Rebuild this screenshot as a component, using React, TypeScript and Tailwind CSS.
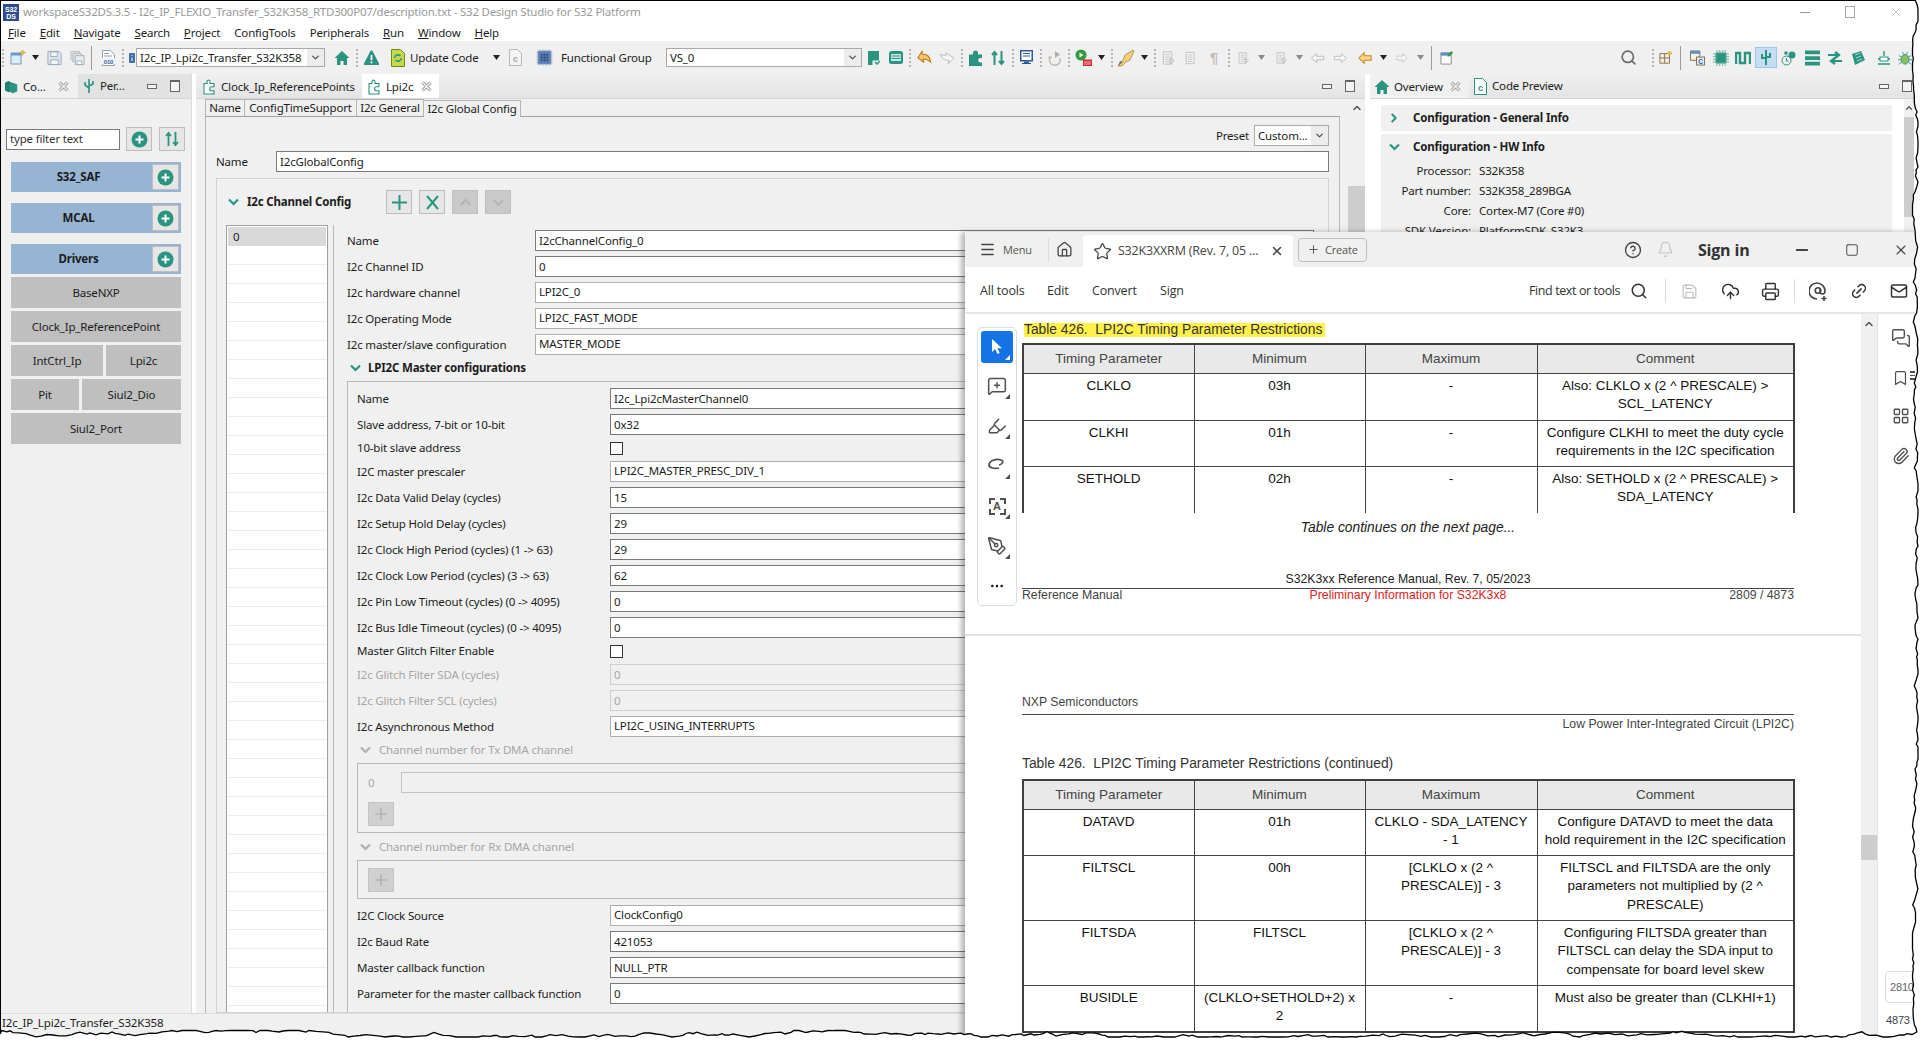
import React from "react";
import { Menu, Home, Star, X, Plus, CircleHelp, Bell, Minus, Square, Search, Save, CloudUpload, Printer, Link2, Mail, MessageSquarePlus, Highlighter, PenTool, Ellipsis, MessagesSquare, Bookmark, LayoutGrid, Paperclip, ChevronUp, ChevronDown, ChevronRight } from "lucide-react";

const TEAL = "#2a9480";

function S({ c, vb = "0 0 16 16", children }: { c: string; vb?: string; children?: React.ReactNode }) {
  return <svg className={"shrink-0 " + c} viewBox={vb} fill="none">{children}</svg>;
}
function Grip({ c }: { c: string }) {
  return <div className={"shrink-0 h-[18px] w-[2px] border-l-2 border-dotted border-[#b8b6ae] " + c} />;
}
function Sep({ c }: { c: string }) {
  return <div className={"shrink-0 h-[24px] w-[1px] bg-[#9a9a9a] " + c} />;
}
function Drop({ c, grey }: { c: string; grey?: boolean }) {
  return <S c={"w-[7px] h-[5px] " + c} vb="0 0 7 5"><path d="M0 0h7L3.5 5z" fill={grey ? "#8b8b8b" : "#222"} /></S>;
}
function DocG({ c, arrow }: { c: string; arrow?: boolean }) {
  return (
    <S c={"h-[18px] " + c}>
      <path d="M2.5 1.5h9v13h-9z" fill="#f2f2f2" stroke="#bdbdbd" />
      <path d="M4.5 4.5h5M4.5 7h5M4.5 9.5h5M4.5 12h5" stroke="#c4c4c4" />
      {arrow && <path d="M10 8l4 3-4 3z" fill="#e8e8e8" stroke="#b5b5b5" />}
    </S>
  );
}
function TabClose() {
  return (
    <svg className="shrink-0 w-[11px] h-[11px]" viewBox="0 0 11 11" fill="none">
      <path d="M1.5 1.5l8 8M9.5 1.5l-8 8" stroke="#8a8a8a" strokeWidth="3" />
      <path d="M1.5 1.5l8 8M9.5 1.5l-8 8" stroke="#f7f7f7" strokeWidth="1.4" />
    </svg>
  );
}
function Puzzle({ c = "w-[13px] h-[16px]" }: { c?: string }) {
  return (
    <S c={c} vb="0 0 13 16">
      <path d="M1 4.5h3V2.6a1.5 1.5 0 013 0V4.5h4v3.2H8.6a2 2 0 000 4H11V15H1z" stroke={TEAL} strokeWidth="1.1" fill="#fff" />
    </S>
  );
}
function MinMax({ a, b }: { a: string; b: string }) {
  return (
    <>
      <div className={"shrink-0 w-[10px] h-[5px] border border-[#666] bg-[#f4f4f4] " + a} />
      <div className={"shrink-0 w-[10px] h-[12px] border border-[#666] border-t-2 bg-[#f4f4f4] " + b} />
    </>
  );
}
function Plusy({ c }: { c: string }) {
  return (
    <div className={"shrink-0 flex items-center justify-center border border-[#bdbdbd] bg-[#e6e6e6] " + c}>
      <svg className="w-[17px] h-[17px]" viewBox="0 0 17 17">
        <circle cx="8.5" cy="8.5" r="8" fill={TEAL} />
        <path d="M8.5 4.5v8M4.5 8.5h8" stroke="#fff" strokeWidth="2" />
      </svg>
    </div>
  );
}
function Combo({ children, c }: { children: React.ReactNode; c: string }) {
  return (
    <div className={"shrink-0 flex items-center justify-between border border-[#a9a9a9] bg-white " + c}>
      <span className="pl-[3px] whitespace-nowrap">{children}</span>
      <div className="flex items-center justify-center h-full bg-[#ececec] w-[17px]">
        <ChevronDown className="w-[11px] h-[11px] text-[#555]" strokeWidth={3} />
      </div>
    </div>
  );
}

function Toolbar() {
  return (
    <div className="flex items-center h-[33px] bg-[#f0f0f0] overflow-hidden shrink-0">
      <Grip c="ml-[2px]" />
      <S c="ml-[6px] w-[16px] h-[17px]"><path d="M1 3.5h10v11H1z" fill="#dcecf8" stroke="#7d97b3" /><path d="M1 3.5h10V6H1z" fill="#6a9bd0" /><path d="M12.5 0.5l1 2 2 .6-2 .8-1 2-.9-2-2-.8 2-.6z" fill="#f4c542" stroke="#b98a18" strokeWidth=".5" /></S>
      <Drop c="ml-[6px]" />
      <S c="ml-[8px] w-[15px] h-[16px]"><path d="M1 1h12l2 2v12H1z" fill="#dde6ef" stroke="#98a8ba" /><path d="M4 1.5h7v5H4zM4 10h8v5H4z" fill="#f4f7fa" stroke="#98a8ba" /></S>
      <S c="ml-[8px] w-[15px] h-[16px]"><path d="M1 1h9v9H1z" fill="#dfe4e9" stroke="#b8c0c8" /><path d="M3 3h9v9H3z" fill="#dfe4e9" stroke="#b0b8c1" /><path d="M5.5 5.5h9.5v9.5H5.5z" fill="#e8edf2" stroke="#a2acb6" /><path d="M7.5 11h5v4h-5z" fill="#fff" stroke="#a2acb6" /></S>
      <Sep c="ml-[6px]" />
      <S c="ml-[10px] w-[13px] h-[16px]" vb="0 0 13 16"><path d="M.5.5h8l4 4v11H.5z" fill="#fff" stroke="#8aa0b8" /><path d="M2 3.5h5M2 6h8" stroke="#8aa0b8" /><rect x="0" y="8" width="13" height="6" fill="#eef3f8" /><text x="6.5" y="13.5" textAnchor="middle" fontSize="6" fontFamily="Liberation Sans" fontWeight="700" fill="#3e6a9a">010</text></S>
      <Grip c="ml-[7px]" />
      <S c="ml-[5px] w-[6px] h-[10px]" vb="0 0 6 10"><rect width="6" height="10" rx="1" fill="#3f6ea5" /><path d="M3 2v1M3 4.5V8" stroke="#fff" /></S>
      <Combo c="ml-[1px] w-[189px] h-[19px]">I2c_IP_Lpi2c_Transfer_S32K358</Combo>
      <S c="ml-[9px] w-[16px] h-[16px]"><path d="M8 1L0.5 8H3v7h3.5v-4h3v4H13V8h2.5z" fill={TEAL} /></S>
      <Grip c="ml-[6px]" />
      <S c="ml-[5px] w-[17px] h-[16px]"><path d="M8 .5c.7 0 1 .3 1.3.9l6.2 12c.4.9 0 1.6-1 1.6h-13c-1 0-1.4-.7-1-1.6l6.2-12C7 .8 7.3.5 8 .5z" fill={TEAL} /><path d="M8 5v5.2M8 11.5v1.7" stroke="#fff" strokeWidth="1.8" /></S>
      <S c="ml-[11px] w-[14px] h-[18px]" vb="0 0 14 18"><path d="M.5.5h9l4 4v13H.5z" fill="#c7d94a" stroke="#6f8a18" /><path d="M3.5 9a3.5 3.5 0 016-2M10.5 9a3.5 3.5 0 01-6 2" stroke={TEAL} strokeWidth="1.6" /></S>
      <span className="ml-[5px] w-[69px] whitespace-nowrap">Update Code</span>
      <Drop c="ml-[14px]" />
      <S c="ml-[9px] w-[13px] h-[17px]" vb="0 0 13 17"><path d="M.5.5h8l4 4v12H.5z" fill="#f4f4f4" stroke="#b8b8b8" /><text x="6.5" y="13" textAnchor="middle" fontSize="9" fontFamily="Liberation Sans" fontWeight="700" fill="#a6a6a6">c</text></S>
      <S c="ml-[14px] w-[17px] h-[17px]" vb="0 0 17 17"><rect x="2" y="2" width="13" height="13" fill="#4169a8" stroke="#8aa0c4" /><rect x="5" y="5" width="7" height="7" fill="#274a85" /><path d="M4 0v17M7 0v17M10 0v17M13 0v17M0 4h17M0 7h17M0 10h17M0 13h17" stroke="#8aa0c4" strokeWidth=".5" /></S>
      <span className="ml-[8px] w-[92px] whitespace-nowrap">Functional Group</span>
      <Combo c="ml-[13px] w-[196px] h-[19px]">VS_0</Combo>
      <S c="ml-[5px] w-[13px] h-[16px]" vb="0 0 13 16"><path d="M1 1h11v9.5H5.5V15H1z" fill={TEAL} /><path d="M8 12l2 2 3-3" stroke={TEAL} strokeWidth="1.5" /></S>
      <S c="ml-[8px] w-[16px] h-[16px]"><rect x="1" y="1" width="14" height="13" rx="2.5" fill={TEAL} /><rect x="3" y="4" width="10" height="7" fill="#cfe7e1" /><path d="M3.5 6h9M3.5 8.5h9" stroke={TEAL} /></S>
      <Grip c="ml-[5px]" />
      <S c="ml-[6px] w-[16px] h-[16px]"><path d="M6 1L1 7l5 5V9c3 0 5 1 7 4 0-6-2-9-7-9z" fill="#f6c667" stroke="#b5781c" transform="rotate(-8 8 8)" /></S>
      <S c="ml-[6px] w-[16px] h-[16px]"><path d="M7 3l8 5-6 6 1-3.5C6 10 3 9 1 4c2 1 4 1.5 6 1.5z" fill="#f6f6f6" stroke="#bcbcbc" /></S>
      <Grip c="ml-[6px]" />
      <S c="ml-[6px] w-[13px] h-[16px]" vb="0 0 13 16"><path d="M0 4.5h4V3a2.5 2.5 0 015 0v1.5h4V8h-2a2.3 2.3 0 000 4.5h2V16H0z" fill={TEAL} /></S>
      <S c="ml-[9px] w-[14px] h-[16px]" vb="0 0 14 16"><path d="M3.5 15V2M1 5l2.5-3L6 5M10.5 1v13M8 11l2.5 3 2.5-3" stroke={TEAL} strokeWidth="2" /></S>
      <Grip c="ml-[7px]" />
      <S c="ml-[6px] w-[13px] h-[15px]" vb="0 0 13 15"><rect x=".75" y=".75" width="11.5" height="10" fill="#fff" stroke="#2c5a9a" strokeWidth="1.5" /><path d="M3 3.5h7M3 6h7" stroke="#2c5a9a" /><path d="M4 11.5v1.5H2v1h9v-1H9v-1.5z" fill="#2c5a9a" /></S>
      <Grip c="ml-[7px]" />
      <S c="ml-[5px] w-[16px] h-[18px]"><path d="M3 7a5.5 5.5 0 1010 1" stroke="#bdbdb5" strokeWidth="1.6" /><path d="M8 1v7l5-3.5z" fill="#a8b3a8" /><path d="M2 6l1 2 2-1" stroke="#c6a566" /></S>
      <Grip c="ml-[5px]" />
      <S c="ml-[5px] w-[18px] h-[18px]" vb="0 0 18 18"><circle cx="6" cy="6" r="5.5" fill="#2f9a3e" /><path d="M4.5 3.5l4 2.5-4 2.5z" fill="#fff" /><rect x="8" y="10.5" width="9" height="6.5" fill="#d8232a" /><path d="M9 13h7M9 15h7" stroke="#fff" strokeWidth=".7" /></S>
      <Drop c="ml-[5px]" />
      <Grip c="ml-[6px]" />
      <S c="ml-[4px] w-[18px] h-[18px]" vb="0 0 18 18"><path d="M16 1l1 1-4 9-4 2-4 4-4 0 5-6 2-5z" fill="#f1cf7c" stroke="#9a7a3a" strokeWidth=".7" /><path d="M1 17l5-4-3-1z" fill="#7a7166" /></S>
      <Drop c="ml-[6px]" />
      <Grip c="ml-[6px]" />
      <DocG c="ml-[5px] w-[15px]" arrow />
      <DocG c="ml-[8px] w-[14px]" />
      <span className="ml-[12px] w-[8px] text-[15px] leading-none font-bold text-[#bcbcbc] font-['Liberation_Sans',sans-serif]">¶</span>
      <Grip c="ml-[10px]" />
      <DocG c="ml-[7px] w-[13px]" arrow />
      <Drop c="ml-[8px]" grey />
      <DocG c="ml-[10px] w-[13px]" arrow />
      <Drop c="ml-[8px]" grey />
      <S c="ml-[7px] w-[15px] h-[14px]"><path d="M1 8l6-5v3h8v4H7v3z" fill="#f4f4f4" stroke="#b8b8b8" /></S>
      <S c="ml-[8px] w-[15px] h-[14px]"><path d="M15 8L9 3v3H1v4h8v3z" fill="#f4f4f4" stroke="#b8b8b8" /></S>
      <S c="ml-[10px] w-[14px] h-[14px]"><path d="M1 8l6-6v3.5h8v5H7V14z" fill="#f8d985" stroke="#c9861d" strokeWidth="1.2" /></S>
      <Drop c="ml-[8px]" />
      <S c="ml-[9px] w-[12px] h-[14px]"><path d="M15 8L9 2v3.5H1v5h8V14z" fill="#f6f6f6" stroke="#bdbdbd" /></S>
      <Drop c="ml-[9px]" grey />
      <Sep c="ml-[7px]" />
      <S c="ml-[8px] w-[15px] h-[17px]"><path d="M1 3h11v12H1z" fill="#fff" stroke="#8a8a8a" /><path d="M1 3h11v3H1z" fill="#5f8fc4" /><path d="M12 1l2 2-4 4-2 0 0-2z" fill="#3d9a4a" /></S>
      <Search className="ml-[165px] shrink-0 w-[17px] h-[17px] text-[#6c6c6c]" strokeWidth={2.4} />
      <Grip c="ml-[15px]" />
      <S c="ml-[5px] w-[14px] h-[15px]"><path d="M1 3.5h11v11H1zM1 8.5h11M6.5 3.5v11" stroke="#7a6a55" fill="#f3ecd9" /><path d="M12 .5l1.2 1.6L15 3l-1.8 1L12 5.5 10.8 4 9 3l1.8-.9z" fill="#f4c542" stroke="#b98a18" strokeWidth=".5" /></S>
      <Sep c="ml-[7px]" />
      <S c="ml-[9px] w-[15px] h-[16px]"><path d="M.5.5h10v10H.5z" fill="#f7f0e0" stroke="#7b6a55" /><path d="M.5.5h10v3H.5z" fill="#5f8fc4" /><rect x="7" y="7" width="8.5" height="8.5" fill="#e5edf6" stroke="#7b6a55" /><text x="11.2" y="14" textAnchor="middle" fontSize="7" fontFamily="Liberation Sans" fontWeight="700" fill="#2c5a9a">C</text></S>
      <S c="ml-[8px] w-[16px] h-[16px]"><rect x="2.5" y="2.5" width="11" height="11" rx="1" fill={TEAL} /><path d="M4 0v16M6.7 0v16M9.3 0v16M12 0v16M0 4h16M0 6.7h16M0 9.3h16M0 12h16" stroke="#6bb6a6" strokeWidth="1" /><rect x="3.5" y="3.5" width="9" height="9" fill={TEAL} /></S>
      <S c="ml-[6px] w-[16px] h-[16px]"><path d="M1 14V3h4v10h5V3h5v11" stroke={TEAL} strokeWidth="2.4" /></S>
      <div className="ml-[4px] shrink-0 flex items-center justify-center w-[22px] h-[21px] bg-[#c5ddf3] border border-[#9cc5e8]">
        <S c="w-[12px] h-[17px]" vb="0 0 12 17"><path d="M6 1v15M2 5v4h3M10 4v4H7" stroke={TEAL} strokeWidth="2" /></S>
      </div>
      <S c="ml-[4px] w-[16px] h-[16px]"><circle cx="5.5" cy="10.5" r="4.5" stroke={TEAL} /><path d="M5.5 8v3h2" stroke={TEAL} /><circle cx="11" cy="5" r="3.5" fill={TEAL} /><circle cx="5" cy="3" r="1.8" fill={TEAL} /></S>
      <S c="ml-[8px] w-[15px] h-[16px]"><path d="M0 0h16v4H0zM0 6h16v4H0zM0 12h16v4H0z" fill={TEAL} /></S>
      <S c="ml-[7px] w-[16px] h-[16px]"><path d="M1 5h10M8 2l4 3-4 3M15 11H5M8 8l-4 3 4 3" stroke={TEAL} strokeWidth="2.2" /></S>
      <S c="ml-[7px] w-[16px] h-[16px]"><path d="M2 4l9-3 4 9-10 5z" fill={TEAL} /><path d="M5 5l5-2M6 8l5-2M7 11l5-2" stroke="#a8d6cb" /></S>
      <S c="ml-[12px] w-[12px] h-[16px]" vb="0 0 12 16"><path d="M6 1v5" stroke={TEAL} strokeWidth="1.4" /><rect x="2" y="7" width="8" height="4" fill="#fff" stroke={TEAL} /><path d="M0 9h2M10 9h2M0 14h12" stroke={TEAL} strokeWidth="1.3" /></S>
      <S c="ml-[8px] w-[14px] h-[16px]"><ellipse cx="8" cy="9.5" rx="4.5" ry="5.5" fill="#8fbf5c" stroke={TEAL} /><path d="M1 5l3 2M15 5l-3 2M0 10h3.5M16 10h-3.5M1 15l3-2M15 15l-3-2M5 1l1.5 3M11 1L9.5 4" stroke={TEAL} /></S>
    </div>
  );
}

function Row({ label, children, w, dis }: { label: string; children: React.ReactNode; w: string; dis?: boolean }) {
  return (
    <div className="flex items-center h-[21px] shrink-0">
      <span className={"shrink-0 whitespace-nowrap " + w + (dis ? " text-[#a6a6a6]" : "")}>{label}</span>
      {children}
    </div>
  );
}
function Inp({ children, kind = "t" }: { children?: React.ReactNode; kind?: "t" | "s" | "d" }) {
  const cls = kind === "t" ? "border-[#7a7a7a] bg-white" : kind === "s" ? "border-[#adadad] bg-white pb-[2px]" : "border-[#cfcfcf] bg-[#f0f0f0] text-[#a6a6a6]";
  return <div className={"flex-1 h-[21px] flex items-center px-[3px] border whitespace-nowrap " + cls}>{children}</div>;
}
function Check() {
  return (
    <div className="flex-1">
      <div className="w-[13px] h-[13px] border border-[#333] bg-white" />
    </div>
  );
}
function MiniBtn({ kind, dis }: { kind: "plus" | "x" | "up" | "down"; dis?: boolean }) {
  const col = dis ? "#b4b4b4" : TEAL;
  return (
    <div className={"shrink-0 flex items-center justify-center w-[26px] h-[24px] border " + (dis ? "bg-[#c9c9c9] border-[#c0c0c0]" : "bg-[#e6e6e6] border-[#bdbdbd]")}>
      <svg className="w-[15px] h-[15px]" viewBox="0 0 15 15" fill="none" stroke={col} strokeWidth="2">
        {kind === "plus" && <path d="M7.5 0v15M0 7.5h15" />}
        {kind === "x" && <path d="M2 1l11 13M13 1L2 14" />}
        {kind === "up" && <path d="M3 10l4.5-5 4.5 5" />}
        {kind === "down" && <path d="M3 5l4.5 5 4.5-5" />}
      </svg>
    </div>
  );
}
function Chev({ c = "", col = TEAL }: { c?: string; col?: string }) {
  return (
    <svg className={"shrink-0 w-[11px] h-[8px] " + c} viewBox="0 0 11 8" fill="none"><path d="M1 1.5l4.5 4.5L10 1.5" stroke={col} strokeWidth="2.2" /></svg>
  );
}
function GreyPlus() {
  return (
    <div className="w-[26px] h-[24px] flex items-center justify-center bg-[#d0d0d0] border border-[#c4c4c4]">
      <Plus className="w-[18px] h-[18px] text-[#b2b2b2]" strokeWidth={2} />
    </div>
  );
}

function Sidebar() {
  const Hd = ({ t }: { t: string }) => (
    <div className="h-[30px] flex items-center bg-[#98b4d3]">
      <span className="flex-1 text-center font-bold pr-[6px]">{t}</span>
      <Plusy c="w-[27px] h-[26px] mr-[2px]" />
    </div>
  );
  const Bt = ({ t, c = "" }: { t: string; c?: string }) => (
    <div className={"h-[31px] flex items-center justify-center bg-[#bfbfbf] " + c}>{t}</div>
  );
  return (
    <div className="w-[192px] shrink-0 flex flex-col border-r border-[#dcdcdc] bg-[#f0f0f0]">
      <div className="h-[25px] shrink-0 flex items-center border-b border-[#d6d6d6] bg-[#e2e2e2]">
        <div className="w-[78px] h-full bg-[#f0f0f0] flex items-center pl-[4px] pt-[1px]">
          <S c="w-[16px] h-[14px]"><path d="M0 3l4-2 4 2v9l-4 2-4-2z" fill="#22806e" /><path d="M5 5l4-2 5 2v8l-5 2-4-2z" fill={TEAL} /></S>
          <span className="ml-[3px]">Co...</span>
          <div className="ml-auto mr-[9px]"><TabClose /></div>
        </div>
        <S c="ml-[5px] w-[12px] h-[16px]" vb="0 0 12 16"><path d="M6 1v14M6 10L2 7V4M6 8l4-2V3" stroke={TEAL} strokeWidth="1.6" /></S>
        <span className="ml-[5px] w-[30px]">Per...</span>
        <MinMax a="ml-[17px]" b="ml-[13px]" />
      </div>
      <div className="flex-1 px-[6px]">
        <div className="flex items-center mt-[28px]">
          <div className="w-[114px] h-[21px] flex items-center px-[3px] bg-white border border-[#7a7a7a] text-[#333]">type filter text</div>
          <Plusy c="ml-[6px] w-[26px] h-[24px]" />
          <div className="ml-[7px] w-[26px] h-[24px] flex items-center justify-center border border-[#bdbdbd] bg-[#e6e6e6]">
            <S c="w-[14px] h-[16px]" vb="0 0 14 16"><path d="M3.5 15V2M1 5l2.5-3L6 5M10.5 1v13M8 11l2.5 3 2.5-3" stroke={TEAL} strokeWidth="1.8" /></S>
          </div>
        </div>
        <div className="ml-[5px] w-[170px] flex flex-col mt-[11px]">
          <Hd t="S32_SAF" />
          <div className="h-[11px]" />
          <Hd t="MCAL" />
          <div className="h-[11px]" />
          <Hd t="Drivers" />
          <div className="flex flex-col gap-[3px] mt-[3px]">
            <Bt t="BaseNXP" />
            <Bt t="Clock_Ip_ReferencePoint" />
            <div className="flex gap-[3px]"><Bt t="IntCtrl_Ip" c="w-[92px]" /><Bt t="Lpi2c" c="flex-1" /></div>
            <div className="flex gap-[3px]"><Bt t="Pit" c="w-[68px]" /><Bt t="Siul2_Dio" c="flex-1" /></div>
            <Bt t="Siul2_Port" />
          </div>
        </div>
      </div>
    </div>
  );
}

function Editor() {
  const l1 = "w-[188px]";
  const l2 = "w-[253px]";
  return (
    <div className="w-[1169px] ml-[4px] shrink-0 flex flex-col">
      <div className="h-[25px] shrink-0 flex items-stretch border-b border-[#d6d6d6] bg-gradient-to-b from-[#f0f0f0] to-[#e4e4e4]">
        <div className="flex items-center pl-[7px] pt-[1px] w-[166px]">
          <Puzzle />
          <span className="ml-[5px] whitespace-nowrap">Clock_Ip_ReferencePoints</span>
        </div>
        <div className="flex items-center pl-[6px] pt-[1px] w-[77px] bg-white">
          <Puzzle />
          <span className="ml-[5px]">Lpi2c</span>
          <div className="ml-[8px]"><TabClose /></div>
        </div>
        <div className="flex-1 flex items-start justify-end">
          <div className="flex items-center mt-[6px] mr-[10px]"><MinMax a="" b="ml-[13px]" /></div>
        </div>
      </div>
      <div className="flex-1 min-h-0 flex bg-[#f0f0f0] overflow-hidden">
        <div className="w-[9px] shrink-0" />
        <div className="w-[1135px] shrink-0 flex flex-col min-h-0">
          <div className="h-[18px] shrink-0 flex items-stretch border-b border-[#a0a0a0]">
            <div className="w-[40px] flex items-center justify-center border-x border-t border-[#b5b5b5]">Name</div>
            <div className="w-[112px] flex items-center justify-center border-r border-t border-[#b5b5b5]">ConfigTimeSupport</div>
            <div className="w-[67px] flex items-center justify-center border-r border-t border-[#b5b5b5]">I2c General</div>
            <div className="w-[97px] flex items-center justify-center border-r border-t border-[#b5b5b5] bg-[#f0f0f0] relative top-[1px]">I2c Global Config</div>
          </div>
          <div className="flex-1 min-h-0 border-l border-r border-[#b8b8b8] flex flex-col pl-[10px] pr-[10px] overflow-hidden">
            <div className="flex justify-end items-center shrink-0 h-[21px] mt-[8px]">
              <span className="mr-[5px]">Preset</span>
              <Combo c="w-[75px] h-[21px]">Custom...</Combo>
            </div>
            <div className="flex items-center shrink-0 mt-[5px] h-[21px]">
              <span className="w-[60px]">Name</span>
              <div className="flex-1 h-[21px] bg-white border border-[#7a7a7a] flex items-center px-[3px]">I2cGlobalConfig</div>
            </div>
            <div className="mt-[6px] flex-1 min-h-0 border border-[#d2d2d2] pl-[9px] pr-[14px] overflow-hidden">
              <div className="flex items-center h-[24px] mt-[11px]">
                <Chev c="ml-[2px]" />
                <span className="ml-[8px] w-[139px] font-bold whitespace-nowrap">I2c Channel Config</span>
                <div className="flex gap-[7px]">
                  <MiniBtn kind="plus" /><MiniBtn kind="x" /><MiniBtn kind="up" dis /><MiniBtn kind="down" dis />
                </div>
              </div>
              <div className="flex mt-[11px] items-start">
                <div className="w-[102px] shrink-0 bg-white border border-[#a0a0a0] p-[1px] h-[800px] overflow-hidden">
                  <div className="h-[19px] bg-[#d9d9d9] flex items-center px-[5px]">0</div>
                  {Array.from({ length: 42 }).map((_, i) => <div key={i} className="h-[19px] border-b border-[#ececec]" />)}
                </div>
                <div className="w-[1px] h-[800px] bg-[#b8b8b8] ml-[5px] shrink-0" />
                <div className="flex-1 pl-[13px] pt-[5px] flex flex-col gap-[5px]">
                  <Row label="Name" w={l1}><Inp>I2cChannelConfig_0</Inp></Row>
                  <Row label="I2c Channel ID" w={l1}><Inp>0</Inp></Row>
                  <Row label="I2c hardware channel" w={l1}><Inp kind="s">LPI2C_0</Inp></Row>
                  <Row label="I2c Operating Mode" w={l1}><Inp kind="s">LPI2C_FAST_MODE</Inp></Row>
                  <Row label="I2c master/slave configuration" w={l1}><Inp kind="s">MASTER_MODE</Inp></Row>
                  <div className="h-[16px] flex items-center">
                    <Chev c="ml-[3px]" />
                    <span className="ml-[7px] font-bold">LPI2C Master configurations</span>
                  </div>
                  <div className="border border-[#b8b8b8] pl-[9px] pt-[6px] flex flex-col gap-[5px] h-[700px]">
                    <Row label="Name" w={l2}><Inp>I2c_Lpi2cMasterChannel0</Inp></Row>
                    <Row label="Slave address, 7-bit or 10-bit" w={l2}><Inp>0x32</Inp></Row>
                    <div className="h-[16px] flex items-center"><span className="w-[253px] shrink-0">10-bit slave address</span><Check /></div>
                    <Row label="I2C master prescaler" w={l2}><Inp kind="s">LPI2C_MASTER_PRESC_DIV_1</Inp></Row>
                    <Row label="I2c Data Valid Delay (cycles)" w={l2}><Inp>15</Inp></Row>
                    <Row label="I2c Setup Hold Delay (cycles)" w={l2}><Inp>29</Inp></Row>
                    <Row label="I2c Clock High Period (cycles) (1 -> 63)" w={l2}><Inp>29</Inp></Row>
                    <Row label="I2c Clock Low Period (cycles) (3 -> 63)" w={l2}><Inp>62</Inp></Row>
                    <Row label="I2c Pin Low Timeout (cycles) (0 -> 4095)" w={l2}><Inp>0</Inp></Row>
                    <Row label="I2c Bus Idle Timeout (cycles) (0 -> 4095)" w={l2}><Inp>0</Inp></Row>
                    <div className="h-[16px] flex items-center"><span className="w-[253px] shrink-0">Master Glitch Filter Enable</span><Check /></div>
                    <Row label="I2c Glitch Filter SDA (cycles)" w={l2} dis><Inp kind="d">0</Inp></Row>
                    <Row label="I2c Glitch Filter SCL (cycles)" w={l2} dis><Inp kind="d">0</Inp></Row>
                    <Row label="I2c Asynchronous Method" w={l2}><Inp kind="s">LPI2C_USING_INTERRUPTS</Inp></Row>
                    <div className="h-[16px] flex items-center text-[#a6a6a6]">
                      <Chev c="ml-[3px]" col="#b0b0b0" />
                      <span className="ml-[8px]">Channel number for Tx DMA channel</span>
                    </div>
                    <div className="h-[70px] border border-[#b8b8b8] pl-[10px] pt-[8px] shrink-0">
                      <div className="flex items-center h-[21px] text-[#a6a6a6]">
                        <span className="w-[33px]">0</span>
                        <div className="flex-1 h-[21px] border border-[#c4c4c4]" />
                      </div>
                      <div className="mt-[9px]"><GreyPlus /></div>
                    </div>
                    <div className="h-[17px] flex items-center text-[#a6a6a6]">
                      <Chev c="ml-[3px]" col="#b0b0b0" />
                      <span className="ml-[8px]">Channel number for Rx DMA channel</span>
                    </div>
                    <div className="h-[39px] border border-[#b8b8b8] pl-[10px] pt-[7px] shrink-0"><GreyPlus /></div>
                    <div className="h-0 -mb-[4px]" />
                    <Row label="I2C Clock Source" w={l2}><Inp kind="s">ClockConfig0</Inp></Row>
                    <Row label="I2c Baud Rate" w={l2}><Inp>421053</Inp></Row>
                    <Row label="Master callback function" w={l2}><Inp>NULL_PTR</Inp></Row>
                    <Row label="Parameter for the master callback function" w={l2}><Inp>0</Inp></Row>
                    <div className="h-[16px] flex items-center text-[#a6a6a6] pl-[20px]">High Speed Mode Configuration</div>
                  </div>
                </div>
              </div>
            </div>
          </div>
        </div>
        <div className="w-[8px] shrink-0" />
        <div className="w-[17px] shrink-0 bg-[#f0f0f0] flex flex-col items-center">
          <ChevronUp className="w-[12px] h-[12px] mt-[3px] text-[#555]" strokeWidth={3} />
          <div className="w-[17px] h-[60px] bg-[#cdcdcd] mt-[72px]" />
        </div>
      </div>
    </div>
  );
}

function Overview() {
  const kv = [["Processor:", "S32K358"], ["Part number:", "S32K358_289BGA"], ["Core:", "Cortex-M7 (Core #0)"], ["SDK Version:", "PlatformSDK_S32K3"]];
  return (
    <div className="flex-1 ml-[5px] min-w-0 flex flex-col">
      <div className="h-[25px] shrink-0 flex items-center border-b border-[#d6d6d6] bg-gradient-to-b from-[#f0f0f0] to-[#e4e4e4]">
        <div className="w-[99px] h-full bg-[#f0f0f0] flex items-center pl-[4px] pt-[1px]">
          <S c="w-[16px] h-[16px]"><path d="M8 1L0.5 8H3v7h3.5v-4h3v4H13V8h2.5z" fill={TEAL} /></S>
          <span className="ml-[4px]">Overview</span>
          <div className="ml-[7px]"><TabClose /></div>
        </div>
        <S c="ml-[5px] w-[13px] h-[17px]" vb="0 0 13 17"><path d="M.5.5h8l4 4v12H.5z" fill="#fff" stroke={TEAL} /><text x="6.5" y="13" textAnchor="middle" fontSize="9" fontFamily="Liberation Sans" fontWeight="700" fill={TEAL}>c</text></S>
        <span className="ml-[5px] w-[76px] whitespace-nowrap">Code Preview</span>
        <MinMax a="ml-[311px]" b="ml-[13px]" />
      </div>
      <div className="flex-1 min-h-0 flex bg-white overflow-hidden">
        <div className="w-[511px] ml-[11px] shrink-0 flex flex-col mt-[6px] gap-[3px]">
          <div className="h-[26px] bg-[#f0f0f0] flex items-center">
            <ChevronRight className="ml-[6px] w-[14px] h-[14px]" style={{ color: TEAL }} strokeWidth={3.4} />
            <span className="ml-[12px] font-bold">Configuration - General Info</span>
          </div>
          <div className="h-[500px] bg-[#f0f0f0] pt-[5px]">
            <div className="h-[16px] flex items-center">
              <Chev c="ml-[8px]" />
              <span className="ml-[13px] font-bold">Configuration - HW Info</span>
            </div>
            <div className="mt-[6px] flex flex-col">
              {kv.map(([k, v]) => (
                <div key={k} className="flex h-[20px] items-center">
                  <span className="w-[90px] text-right">{k}</span>
                  <span className="ml-[8px]">{v}</span>
                </div>
              ))}
            </div>
          </div>
        </div>
        <div className="ml-[12px] w-[10px] shrink-0 bg-[#f0f0f0] flex flex-col items-center">
          <ChevronUp className="w-[10px] h-[10px] mt-[4px] text-[#555]" strokeWidth={3} />
          <div className="w-[10px] h-[100px] bg-[#cdcdcd] mt-[4px]" />
        </div>
      </div>
    </div>
  );
}

const H = "border border-[#444] bg-[#e9e9e9] text-[#444] text-center align-middle";
const D = "border border-[#444] text-center align-top pt-[3px] text-[#111] leading-[18.5px]";
function Table({ rows, hs, open }: { rows: React.ReactNode[][]; hs: string[]; open?: boolean }) {
  return (
    <table className={"w-[771px] table-fixed border-collapse text-[13.5px] border-2 border-[#3f3f3f] " + (open ? "border-b-0" : "")}>
      <colgroup><col className="w-[171px]" /><col className="w-[171px]" /><col className="w-[172px]" /><col className="w-[257px]" /></colgroup>
      <tbody>
        <tr className="h-[29px]">
          <td className={H}>Timing Parameter</td><td className={H}>Minimum</td><td className={H}>Maximum</td><td className={H}>Comment</td>
        </tr>
        {rows.map((r, i) => (
          <tr key={i} className={hs[i]}>
            {r.map((c, j) => <td key={j} className={D + (open && i === rows.length - 1 ? " border-b-0" : "")}>{c}</td>)}
          </tr>
        ))}
      </tbody>
    </table>
  );
}

function Pdf() {
  const railIc = "w-[20px] h-[20px] text-[#505050]";
  const Corner = ({ col = "#505050" }: { col?: string }) => <span className="absolute right-[3px] bottom-[3px] w-0 h-0 border-l-[5px] border-l-transparent border-b-[5px]" style={{ borderBottomColor: col }} />;
  return (
    <div className="absolute left-[965px] top-[232px] w-[953px] h-[808px] bg-white flex flex-col shadow-[-4px_0_5px_rgba(0,0,0,0.28)] font-['Open_Sans',sans-serif]">
      <div className="h-[35px] shrink-0 bg-[#f0f0f0] flex items-center text-[#444]">
        <Menu className="ml-[14px] w-[17px] h-[17px]" strokeWidth={2} />
        <span className="ml-[7px] text-[11px] text-[#555]">Menu</span>
        <div className="ml-[16px] w-[1px] h-[24px] bg-[#dcdcdc]" />
        <Home className="ml-[7px] w-[17px] h-[17px]" strokeWidth={1.8} />
        <div className="ml-[10px] w-[210px] h-[32px] self-end bg-white rounded-t-[4px] flex items-center">
          <Star className="ml-[10px] w-[19px] h-[19px]" strokeWidth={1.6} />
          <span className="ml-[6px] w-[142px] text-[12.5px] whitespace-nowrap text-[#444]">S32K3XXRM (Rev. 7, 05 ...</span>
          <X className="ml-[10px] w-[14px] h-[14px]" strokeWidth={2.6} />
        </div>
        <div className="ml-[5px] w-[69px] h-[24px] border border-[#bdbdbd] rounded-[4px] flex items-center justify-center text-[11px] text-[#555]">
          <Plus className="w-[13px] h-[13px] mr-[5px]" strokeWidth={1.8} />Create
        </div>
        <CircleHelp className="ml-[257px] w-[18px] h-[18px]" strokeWidth={1.8} />
        <Bell className="ml-[15px] w-[17px] h-[17px] text-[#c4c4c4]" strokeWidth={1.6} />
        <span className="ml-[24px] text-[16px] font-bold text-[#333]">Sign in</span>
        <Minus className="ml-[43px] w-[18px] h-[18px]" strokeWidth={2.4} />
        <Square className="ml-[34px] w-[14px] h-[14px]" strokeWidth={1.6} />
        <X className="ml-[34px] w-[16px] h-[16px]" strokeWidth={1.6} />
      </div>
      <div className="h-[47px] shrink-0 pt-[3px] border-b-2 border-[#e6e6e6] flex items-center text-[#333] text-[12.5px] relative">
        <span className="ml-[15px] w-[48px] whitespace-nowrap">All tools</span>
        <span className="ml-[19px] w-[26px]">Edit</span>
        <span className="ml-[19px] w-[48px]">Convert</span>
        <span className="ml-[20px] w-[30px]">Sign</span>
        <span className="ml-[339px] w-[92px] whitespace-nowrap tracking-[-0.4px]">Find text or tools</span>
        <Search className="ml-[9px] w-[18px] h-[18px]" strokeWidth={2} />
        <div className="ml-[17px] w-[1px] h-[24px] bg-[#dcdcdc]" />
        <Save className="ml-[15px] w-[17px] h-[17px] text-[#bcbcbc]" strokeWidth={1.6} />
        <CloudUpload className="ml-[23px] w-[19px] h-[19px]" strokeWidth={1.8} />
        <Printer className="ml-[21px] w-[19px] h-[19px]" strokeWidth={1.8} />
        <div className="ml-[14px] w-[1px] h-[24px] bg-[#dcdcdc]" />
        <S c="ml-[14px] w-[20px] h-[20px] text-[#444]" vb="0 0 20 20"><path d="M8 18a8 8 0 118-8c0 2-1 3-2.5 3S11 12 11 10.5V8" stroke="currentColor" strokeWidth="1.6" /><circle cx="9" cy="9.5" r="2.8" stroke="currentColor" strokeWidth="1.6" /><path d="M15 15v5M12.5 17.5h5" stroke="currentColor" strokeWidth="1.6" /></S>
        <Link2 className="ml-[21px] w-[18px] h-[18px] -rotate-45" strokeWidth={2} />
        <Mail className="ml-[22px] w-[18px] h-[18px]" strokeWidth={2} />
      </div>
      <div className="flex-1 min-h-0 flex relative">
        <div className="w-[896px] shrink-0 overflow-hidden tracking-normal font-['Liberation_Sans',Arial,sans-serif]">
          <div className="ml-[59px] mt-[9px] w-[301px] h-[14px] bg-[#fff04a] text-[13.8px] leading-[14px] whitespace-nowrap text-[#333]">Table 426.&nbsp; LPI2C Timing Parameter Restrictions</div>
          <div className="ml-[57px] mt-[6px]">
            <Table open hs={["h-[47px]", "h-[46px]", "h-[47px]"]} rows={[
              ["CLKLO", "03h", "-", <>Also: CLKLO x (2 ^ PRESCALE) &gt;<br />SCL_LATENCY</>],
              ["CLKHI", "01h", "-", <>Configure CLKHI to meet the duty cycle<br />requirements in the I2C specification</>],
              ["SETHOLD", "02h", "-", <>Also: SETHOLD x (2 ^ PRESCALE) &gt;<br />SDA_LATENCY</>],
            ]} />
          </div>
          <div className="ml-[57px] mt-[6px] w-[772px] text-center italic text-[13.8px] leading-[18px] text-[#222]">Table continues on the next page...</div>
          <div className="ml-[57px] mt-[34px] w-[772px] text-center text-[12.25px] leading-[16px] text-[#222]">S32K3xx Reference Manual, Rev. 7, 05/2023</div>
          <div className="ml-[57px] mt-[1px] w-[772px] border-t border-[#444] flex justify-between text-[12.25px] leading-[13px] text-[#444]">
            <span className="w-[200px]">Reference Manual</span>
            <span className="text-[#e02020]">Preliminary Information for S32K3x8</span>
            <span className="w-[200px] text-right">2809 / 4873</span>
          </div>
          <div className="mt-[32px] h-[2px] bg-[#e2e2e2]" />
          <div className="ml-[57px] mt-[59px] text-[12.25px] leading-[14px] text-[#444]">NXP Semiconductors</div>
          <div className="ml-[57px] mt-[5px] w-[772px] border-t border-[#444]" />
          <div className="ml-[57px] mt-[2px] w-[772px] text-right text-[12.25px] leading-[14px] text-[#444]">Low Power Inter-Integrated Circuit (LPI2C)</div>
          <div className="ml-[57px] mt-[25px] text-[13.8px] leading-[16px] text-[#333]">Table 426.&nbsp; LPI2C Timing Parameter Restrictions (continued)</div>
          <div className="ml-[57px] mt-[7px]">
            <Table hs={["h-[46px]", "h-[65px]", "h-[65px]", "h-[47px]"]} rows={[
              ["DATAVD", "01h", <>CLKLO - SDA_LATENCY<br />- 1</>, <>Configure DATAVD to meet the data<br />hold requirement in the I2C specification</>],
              ["FILTSCL", "00h", <>[CLKLO x (2 ^<br />PRESCALE)] - 3</>, <>FILTSCL and FILTSDA are the only<br />parameters not multiplied by (2 ^<br />PRESCALE)</>],
              ["FILTSDA", "FILTSCL", <>[CLKLO x (2 ^<br />PRESCALE)] - 3</>, <>Configuring FILTSDA greater than<br />FILTSCL can delay the SDA input to<br />compensate for board level skew</>],
              ["BUSIDLE", <>(CLKLO+SETHOLD+2) x<br />2</>, "-", "Must also be greater than (CLKHI+1)"],
            ]} />
          </div>
        </div>
        <div className="w-[17px] shrink-0 bg-[#f0f0f0] border-r border-[#e2e2e2] flex flex-col items-center">
          <ChevronUp className="w-[12px] h-[12px] mt-[4px] text-[#555]" strokeWidth={3} />
          <div className="w-[16px] h-[25px] bg-[#cdcdcd] mt-[505px]" />
        </div>
        <div className="flex-1 flex flex-col relative text-[#505050]">
          <MessagesSquare className="ml-[13px] mt-[14px] w-[20px] h-[20px]" strokeWidth={1.7} />
          <div className="ml-[14px] mt-[20px] flex items-start">
            <Bookmark className="w-[17px] h-[20px]" strokeWidth={1.7} />
            <div className="ml-[1px] mt-[3px] flex flex-col gap-[2px]">
              <div className="w-[5px] h-[1.5px] bg-[#505050]" /><div className="w-[5px] h-[1.5px] bg-[#505050]" /><div className="w-[5px] h-[1.5px] bg-[#505050]" />
            </div>
          </div>
          <LayoutGrid className="ml-[14px] mt-[19px] w-[18px] h-[18px]" strokeWidth={1.8} />
          <Paperclip className="ml-[14px] mt-[22px] w-[18px] h-[18px]" strokeWidth={1.8} />
          <div className="absolute left-[7px] top-[657px] w-[40px] h-[32px] border border-[#dcdcdc] rounded-[4px] flex items-center pl-[4px] text-[11px] text-[#666] font-['Liberation_Sans',sans-serif]">2810</div>
          <div className="absolute left-[8px] top-[698px] text-[11px] text-[#444] font-['Liberation_Sans',sans-serif]">4873</div>
        </div>
        <div className="absolute left-[12px] top-[13px] w-[40px] h-[279px] bg-white border border-[#dcdcdc] rounded-[5px] flex flex-col items-center pt-[3px]">
          <div className="relative w-[32px] h-[32px] bg-[#1473e6] rounded-[3px] flex items-center justify-center">
            <svg className="w-[14px] h-[16px]" viewBox="0 0 14 16"><path d="M2 0v13l3.2-3 2.2 5 2.3-1-2.2-4.8H12z" fill="#fff" /></svg>
            <Corner col="#fff" />
          </div>
          <div className="relative w-[32px] h-[32px] mt-[7px] flex items-center justify-center"><MessageSquarePlus className={railIc} strokeWidth={1.8} /><Corner /></div>
          <div className="relative w-[32px] h-[32px] mt-[8px] flex items-center justify-center"><Highlighter className={railIc} strokeWidth={1.8} /><Corner /></div>
          <div className="relative w-[32px] h-[32px] mt-[8px] flex items-center justify-center">
            <svg className={railIc} viewBox="0 0 20 20" fill="none"><path d="M12 9c4-1 5-4 2-5C9 2 2 5 2 9c0 3 6 4 10 3" stroke="currentColor" strokeWidth="1.8" /></svg><Corner />
          </div>
          <div className="relative w-[32px] h-[32px] mt-[8px] flex items-center justify-center">
            <div className="w-[17px] h-[17px] border-2 border-dashed border-[#505050] flex items-center justify-center text-[11px] font-bold leading-none text-[#505050] font-['Liberation_Sans',sans-serif]">A</div><Corner />
          </div>
          <div className="relative w-[32px] h-[32px] mt-[8px] flex items-center justify-center"><PenTool className={railIc} strokeWidth={1.8} /><Corner /></div>
          <div className="w-[32px] h-[32px] mt-[8px] flex items-center justify-center"><Ellipsis className="w-[16px] h-[16px]" strokeWidth={2} /></div>
        </div>
      </div>
    </div>
  );
}

function buildTorn() {
  let s = 123457;
  const r = () => { s = (s * 16807) % 2147483647; return s / 2147483647; };
  let right = "M1915 0";
  let x = 1915;
  for (let y = 4; y < 1034; y += 3 + Math.floor(r() * 4)) {
    x += (r() - 0.5) * 4;
    x = Math.max(1912.5, Math.min(1918, x));
    right += ` L${x.toFixed(1)} ${y}`;
  }
  let y2 = 1033;
  for (let xx = 1912; xx > 0; xx -= 3 + Math.floor(r() * 5)) {
    y2 += (r() - 0.5) * 4;
    y2 = Math.max(1030.5, Math.min(1037, y2));
    right += ` L${xx} ${y2.toFixed(1)}`;
  }
  right += " L0 1034";
  return right;
}
const TORN = buildTorn();

export default function App() {
  const menu: [string, string][] = [["F", "ile"], ["E", "dit"], ["N", "avigate"], ["S", "earch"], ["P", "roject"], ["", "ConfigTools"], ["", "Peripherals"], ["R", "un"], ["W", "indow"], ["H", "elp"]];
  return (
    <div className="relative w-[1920px] h-[1040px] overflow-hidden bg-white flex flex-col text-[11.5px] leading-[16px] text-[#1c1c1c] font-['Noto_Sans',sans-serif] tracking-[-0.17px]">
      <div className="h-[24px] shrink-0 flex items-center">
        <svg className="ml-[3px] w-[16px] h-[17px] shrink-0" viewBox="0 0 16 17"><rect width="16" height="17" fill="#2f4d8c" /><text x="8" y="8" textAnchor="middle" fontSize="7" fontFamily="Liberation Sans" fontWeight="700" fill="#fff">S32</text><text x="8" y="15" textAnchor="middle" fontSize="7" fontFamily="Liberation Sans" fontWeight="700" fill="#fff">DS</text></svg>
        <span className="ml-[4px] text-[#9a9a9a] whitespace-nowrap tracking-[-0.24px]">workspaceS32DS.3.5 - I2c_IP_FLEXIO_Transfer_S32K358_RTD300P07/description.txt - S32 Design Studio for S32 Platform</span>
        <div className="ml-auto mr-[17px] flex items-center text-[#9a9a9a]">
          <div className="w-[10px] h-[1px] bg-[#9a9a9a]" />
          <div className="ml-[35px] w-[10px] h-[12px] border border-[#a8a8a8]" />
          <X className="ml-[34px] w-[14px] h-[14px]" strokeWidth={1} />
        </div>
      </div>
      <div className="h-[17px] shrink-0 flex items-center pl-[8px] gap-[14px]">
        {menu.map(([a, b]) => <span key={a + b}><u>{a}</u>{b}</span>)}
      </div>
      <Toolbar />
      <div className="flex-1 min-h-0 flex overflow-hidden">
        <Sidebar />
        <Editor />
        <Overview />
      </div>
      <div className="h-[27px] shrink-0 bg-[#f0f0f0] border-t border-[#dcdcdc] pl-[2px] pt-[1px]">I2c_IP_Lpi2c_Transfer_S32K358</div>
      <Pdf />
      <svg className="absolute left-0 top-0 w-[1920px] h-[1040px] pointer-events-none" viewBox="0 0 1920 1040" fill="none">
        <path d={TORN + " L0 1040 L1920 1040 L1920 0 Z"} fill="#fff" />
        <path d={TORN} stroke="#000" strokeWidth="1.3" />
        <path d="M0 .5H1915M.5 0V1034" stroke="#000" />
      </svg>
    </div>
  );
}
